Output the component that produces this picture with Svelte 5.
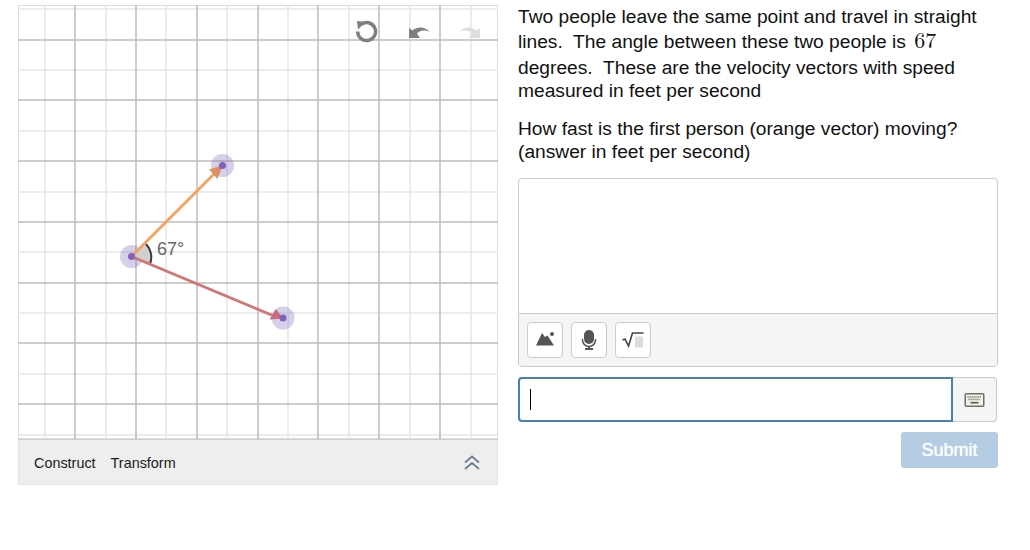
<script>
  const minorX = [45, 106, 166, 227, 288, 349, 410, 471];
  const majorX = [75, 136, 197, 258, 318, 379, 440];
  const minorY = [9, 70, 131, 192, 252, 313, 374, 435];
  const majorY = [40, 100, 161, 222, 283, 343, 404];
  const points = [[222.5, 165.5], [131.5, 256.5], [283, 318]];
</script>

<main class="page">
  <section class="graphie">
    <div class="canvas">
      <svg class="plot" width="480" height="434" viewBox="18 5 480 434">
        {#each minorX as x}<line x1={x} x2={x} y1="5" y2="439" class="minor" />{/each}
        {#each minorY as y}<line x1="18" x2="498" y1={y} y2={y} class="minor" />{/each}
        {#each majorX as x}<line x1={x} x2={x} y1="5" y2="439" class="major" />{/each}
        {#each majorY as y}<line x1="18" x2="498" y1={y} y2={y} class="major" />{/each}

        {#each points as [x, y]}<circle cx={x} cy={y} r="11.5" fill="#7e62bc" fill-opacity="0.3" />{/each}

        <path d="M131.5 256.5 L144 243 A19 19 0 0 1 150 264 Z" fill="#cfcfcf" />
        <path d="M146 244 A19 19 0 0 1 150 264" fill="none" stroke="#3a3a3a" stroke-width="2" />

        <line x1="131.5" y1="256.5" x2="214" y2="174" stroke="#f5a15f" stroke-width="2.8" />
        <path d="M223 165 L217.5 179 L209 169.5 Z" fill="#dc8f66" />
        <line x1="131.5" y1="256.5" x2="274" y2="316" stroke="#d27575" stroke-width="2.8" />
        <path d="M283 318.5 L269.5 319.5 L276 309 Z" fill="#c86a7e" />

        {#each points as [x, y]}<circle cx={x} cy={y} r="3.5" fill="#7e62bc" />{/each}

        <text x="157" y="255" class="angle">67°</text>
      </svg>

      <div class="history">
        <svg width="24" height="24" viewBox="0 0 24 24" class="reset">
          <path d="M7 5.5 A9 9 0 1 1 3.6 12.5" fill="none" stroke="#7f7f7f" stroke-width="3.4" />
          <path d="M3 2 L11.5 3 L4 10.5 Z" fill="#7f7f7f" />
        </svg>
        <svg width="24" height="16" viewBox="0 0 24 16">
          <path d="M2 15 V5 L5.5 7.5 C10 3.5 17 3 23 9 C17 6.5 13 7.5 10 10.5 L13 15 Z" fill="#7f7f7f" />
        </svg>
        <svg width="24" height="16" viewBox="0 0 24 16">
          <path d="M22 15 V5 L18.5 7.5 C14 3.5 7 3 1 9 C7 6.5 11 7.5 14 10.5 L11 15 Z" fill="#dedede" />
        </svg>
      </div>
    </div>

    <footer class="tools">
      <span>Construct</span>
      <span>Transform</span>
      <svg class="chevrons" width="18" height="16" viewBox="0 0 18 16">
        <path d="M2 7.5 L9 1.5 L16 7.5 M2 14 L9 8 L16 14" fill="none" stroke="#6c7f93" stroke-width="1.8" />
      </svg>
    </footer>
  </section>

  <section class="question">
    <p>
      Two people leave the same point and travel in straight lines.&nbsp; The angle between these two people is <span class="math">67</span> degrees.&nbsp; These are the velocity vectors with speed measured in feet per second
    </p>
    <p class="second">How fast is the first person (orange vector) moving?<br />(answer in feet per second)</p>

    <div class="editor">
      <div class="area"></div>
      <div class="toolbar">
        <button aria-label="Add image">
          <svg class="image-icon" width="18" height="14" viewBox="0 0 18 14">
            <path d="M0 13.5 L6 1 L9 5 L11.5 3.5 L18 13.5 Z" fill="#555" />
            <circle cx="16" cy="2" r="2" fill="#555" />
          </svg>
        </button>
        <button aria-label="Record audio">
          <svg width="16" height="20" viewBox="0 0 16 20">
            <rect x="3" y="0" width="10" height="14" rx="5" fill="#555" />
            <path d="M1.5 9 V10 A6.5 6.5 0 0 0 14.5 10 V9" fill="none" stroke="#555" stroke-width="1.5" />
            <path d="M8 16 V18 M4 19 H12" stroke="#555" stroke-width="2" />
          </svg>
        </button>
        <button aria-label="Insert math">
          <svg width="22" height="16" viewBox="0 0 22 16">
            <path d="M0.5 8 L3 7 L6.5 14 L10.5 1 H21.5" fill="none" stroke="#444" stroke-width="1.6" />
            <rect x="13" y="4.5" width="8" height="11" fill="#dcdcdc" />
          </svg>
        </button>
      </div>
    </div>

    <div class="answer">
      <div class="input"><span class="caret"></span></div>
      <button class="keyboard" aria-label="Keyboard">
        <svg width="21" height="14" viewBox="0 0 20 14">
          <rect x="0.75" y="0.75" width="18.5" height="12.5" rx="1" fill="#f4f1e6" stroke="#6f6f6f" stroke-width="1.5" />
          <path d="M3 4 H17 M4 6.5 H16" stroke="#777" stroke-width="1.4" stroke-dasharray="1.2 0.8" />
          <path d="M6 9.7 H14" stroke="#555" stroke-width="1.6" />
        </svg>
      </button>
    </div>

    <div class="actions"><button class="submit">Submit</button></div>
  </section>
</main>

<style>
  :global(body) {
    margin: 0;
    background: #fff;
  }

  .page {
    display: flex;
    gap: 20px;
    padding: 5px 0 0 18px;
    width: 980px;
    font-family: "Liberation Sans", Arial, sans-serif;
    color: #111;
  }

  .graphie {
    width: 480px;
    flex: none;
  }

  .canvas {
    position: relative;
    height: 434px;
    background: #fff;
    box-shadow: inset 0 0 0 1px #dcdcdc;
  }

  .plot {
    display: block;
  }

  .minor {
    stroke: #e6e6e6;
    stroke-width: 1.5;
  }

  .major {
    stroke: #bdbdbd;
    stroke-width: 1.5;
  }

  .angle {
    font-size: 18px;
    fill: #666;
    font-family: "Liberation Sans", Arial, sans-serif;
  }

  .history {
    position: absolute;
    top: 14px;
    right: 16px;
    display: flex;
    align-items: center;
    gap: 27px;
  }

  .reset {
    margin-right: 2px;
  }

  .tools {
    display: flex;
    align-items: center;
    gap: 15px;
    height: 46px;
    padding: 2px 16px 0 15px;
    background: #eee;
    border: 1px solid #e4e4e4;
    border-top-color: #cfcfcf;
    box-sizing: border-box;
    font-size: 14.4px;
    color: #1a1a1a;
  }

  .chevrons {
    margin-left: auto;
  }

  .question {
    width: 480px;
    flex: none;
    font-size: 19.2px;
    line-height: 23px;
  }

  p {
    margin: 0;
  }

  .math {
    display: inline-block;
    padding: 0 4px 7px 3px;
    font-family: "Latin Modern Roman", "Liberation Serif", serif;
    font-size: 22px;
    line-height: 21px;
  }

  .second {
    margin-top: 15px;
  }

  .editor {
    margin-top: 15px;
    height: 189px;
    box-sizing: border-box;
    border: 1px solid #ccc;
    border-radius: 4px;
    display: flex;
    flex-direction: column;
    overflow: hidden;
  }

  .area {
    flex: 1;
  }

  .toolbar {
    display: flex;
    gap: 8px;
    height: 53px;
    box-sizing: border-box;
    padding: 8px;
    background: #f5f5f5;
    border-top: 1px solid #ccc;
  }

  button {
    padding: 0;
    font-family: inherit;
  }

  .toolbar button {
    width: 36px;
    height: 36px;
    display: flex;
    align-items: center;
    justify-content: center;
    background: #fff;
    border: 1px solid #ccc;
    border-radius: 4px;
  }

  .image-icon {
    margin-bottom: 2px;
  }

  .answer {
    display: flex;
    margin-top: 10px;
    height: 45px;
  }

  .input {
    flex: none;
    width: 435px;
    box-sizing: border-box;
    border: 2px solid #4a7fb5;
    border-radius: 4px 0 0 4px;
    display: flex;
    align-items: center;
    padding-left: 10px;
  }

  .caret {
    width: 1px;
    height: 21px;
    background: #000;
  }

  .keyboard {
    width: 44px;
    display: flex;
    align-items: center;
    justify-content: center;
    background: #f5f5f5;
    border: 1px solid #ccc;
    border-left: none;
    border-radius: 0 4px 4px 0;
  }

  .actions {
    display: flex;
    justify-content: flex-end;
    margin-top: 10px;
  }

  .submit {
    width: 97px;
    height: 36px;
    border: none;
    border-radius: 3px;
    background: #b5cde3;
    color: #fff;
    font-size: 18px;
    text-shadow: 0 0 1px #fff;
  }
</style>
